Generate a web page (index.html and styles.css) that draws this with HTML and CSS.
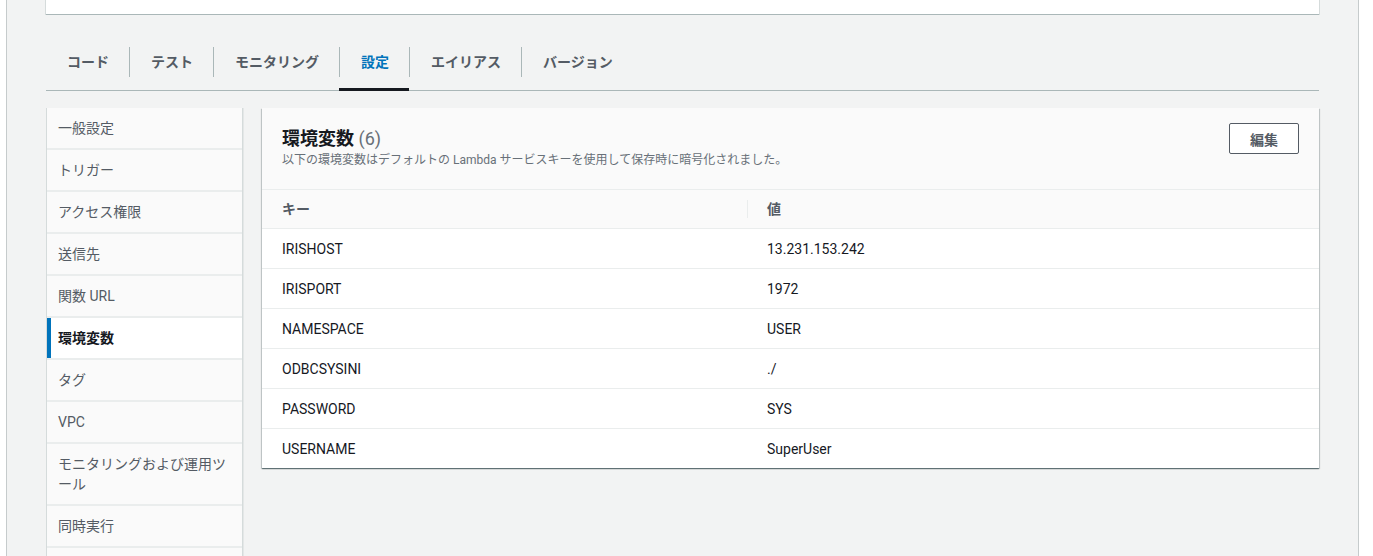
FILE: index.html
```html
<!DOCTYPE html>
<html lang="ja">
<head>
<meta charset="utf-8">
<title>Lambda 設定 - 環境変数</title>
<link rel="stylesheet" href="styles.css">
</head>
<body>
<div class="frame">
  <div class="top-card"></div>

  <div class="tabs">
    <div class="tab"><span class="tab-label first">コード</span></div>
    <div class="tab"><span class="tab-label">テスト</span></div>
    <div class="tab"><span class="tab-label">モニタリング</span></div>
    <div class="tab active"><span class="tab-label">設定</span></div>
    <div class="tab"><span class="tab-label">エイリアス</span></div>
    <div class="tab"><span class="tab-label">バージョン</span></div>
  </div>

  <div class="content">
    <nav class="side-nav">
      <div class="nav-item">一般設定</div>
      <div class="nav-item">トリガー</div>
      <div class="nav-item">アクセス権限</div>
      <div class="nav-item">送信先</div>
      <div class="nav-item">関数 URL</div>
      <div class="nav-item active">環境変数</div>
      <div class="nav-item">タグ</div>
      <div class="nav-item">VPC</div>
      <div class="nav-item">モニタリングおよび運用ツール</div>
      <div class="nav-item">同時実行</div>
      <div class="nav-item empty"></div>
    </nav>

    <section class="panel">
      <div class="panel-header">
        <div class="panel-title-block">
          <h2 class="panel-title">環境変数 <span class="count">(6)</span></h2>
          <p class="panel-desc">以下の環境変数はデフォルトの Lambda サービスキーを使用して保存時に暗号化されました。</p>
        </div>
        <button class="btn">編集</button>
      </div>
      <table class="env-table">
        <thead>
          <tr>
            <th class="col-key">キー</th>
            <th class="col-val"><div class="th-sep">値</div></th>
          </tr>
        </thead>
        <tbody>
          <tr><td>IRISHOST</td><td>13.231.153.242</td></tr>
          <tr><td>IRISPORT</td><td>1972</td></tr>
          <tr><td>NAMESPACE</td><td>USER</td></tr>
          <tr><td>ODBCSYSINI</td><td>./</td></tr>
          <tr><td>PASSWORD</td><td>SYS</td></tr>
          <tr><td>USERNAME</td><td>SuperUser</td></tr>
        </tbody>
      </table>
    </section>
  </div>
</div>
</body>
</html>
```

FILE: styles.css
```css
* { box-sizing: border-box; }

html, body {
  margin: 0;
  height: 100%;
  overflow: hidden;
  background: #ffffff;
  font-family: Roboto, "Noto Sans CJK JP", sans-serif;
  font-size: 14px;
  color: #16191f;
}

.frame {
  margin-left: 6px;
  width: 1353px;
  height: 100%;
  background: #f2f3f3;
  border-left: 1px solid #c6cbcc;
  border-right: 1px solid #c6cbcc;
  padding: 0 39px;
}

.top-card {
  height: 15px;
  background: #ffffff;
  border-bottom: 1px solid #aab7b8;
  box-shadow: -1px 0 0 0 #d5dbdb, 1px 0 0 0 #d5dbdb;
}

.tabs {
  display: flex;
  margin-top: 30px;
  border-bottom: 1px solid #aab7b8;
}

.tab {
  padding: 2px 0 11px;
  border-bottom: 3px solid transparent;
  margin-bottom: -1px;
}

.tab.active {
  border-bottom-color: #16191f;
}

.tab-label {
  display: block;
  padding: 7px 20px 7px 21px;
  border-left: 1px solid #aab7b8;
  line-height: 16px;
  font-weight: 700;
  color: #545b64;
}

.tab-label.first {
  border-left: none;
}

.tab.active .tab-label {
  color: #0073bb;
}

.content {
  display: flex;
  gap: 20px;
  margin-top: 17px;
  align-items: flex-start;
}

.side-nav {
  width: 196px;
  flex: none;
  display: flex;
  flex-direction: column;
  gap: 2px;
  background: #eaeded;
  border-left: 1px solid #d5dbdb;
  box-shadow: 1px 0 0 0 #d5dbdb, 2px 0 0 0 #e4e7e7;
}

.nav-item {
  background: #fafafa;
  padding: 10px 14px 10px 11px;
  line-height: 20px;
  color: #545b64;
}

.nav-item.empty {
  min-height: 40px;
}

.nav-item.active {
  background: #ffffff;
  border-left: 4px solid #0073bb;
  padding-left: 7px;
  font-weight: 700;
  color: #16191f;
}

.panel {
  flex: 1;
  background: #ffffff;
  box-shadow: 0 1px 1px 0 rgba(0, 28, 36, 0.45), 1px 1px 1px 0 rgba(0, 28, 36, 0.15), -1px 1px 1px 0 rgba(0, 28, 36, 0.15);
}

.panel-header {
  display: flex;
  justify-content: space-between;
  align-items: flex-start;
  background: #fafafa;
  padding: 15px 20px 21px;
  border-bottom: 1px solid #eaeded;
}

.panel-title {
  margin: 5px 0 0;
  font-size: 18px;
  line-height: 22px;
  font-weight: 700;
  color: #16191f;
}

.count {
  font-weight: 400;
  color: #687078;
}

.panel-desc {
  margin: 2px 0 0;
  font-size: 12px;
  line-height: 16px;
  color: #687078;
}

.btn {
  width: 70px;
  height: 31px;
  padding: 0;
  background: #ffffff;
  border: 1px solid #545b64;
  border-radius: 2px;
  font-family: Roboto, "Noto Sans CJK JP", sans-serif;
  font-size: 14px;
  font-weight: 700;
  color: #545b64;
}

.env-table {
  width: 100%;
  border-collapse: collapse;
}

.env-table th {
  background: #fafafa;
  text-align: left;
  font-weight: 700;
  color: #545b64;
  padding: 10px 20px;
  line-height: 18px;
  border-bottom: 1px solid #eaeded;
}

.env-table th.col-key {
  width: 485px;
}

.env-table th.col-val {
  padding-left: 0;
}

.th-sep {
  border-left: 1px solid #eaeded;
  padding-left: 19px;
}

.env-table td {
  padding: 11px 20px 9px;
  line-height: 19px;
  border-bottom: 1px solid #eaeded;
  color: #16191f;
}

.env-table tbody tr:last-child td {
  border-bottom: none;
}
```
